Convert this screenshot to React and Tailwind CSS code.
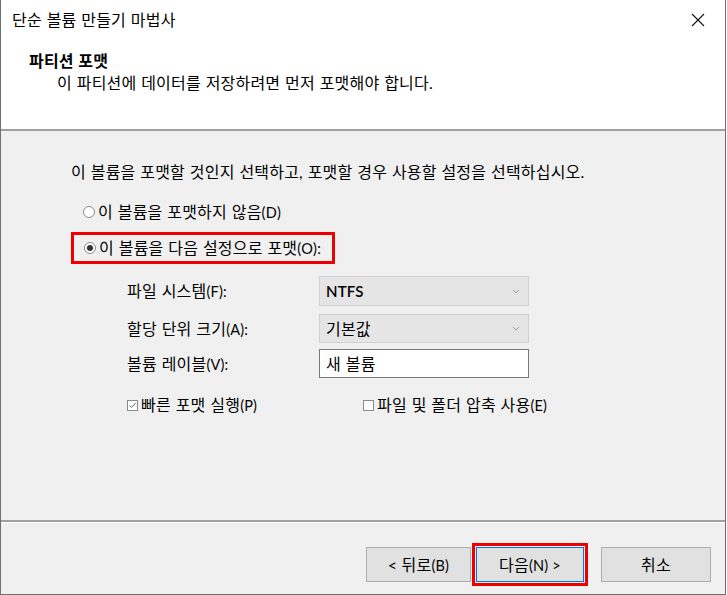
const font = { fontFamily: "Lato, 'Noto Sans CJK KR', sans-serif", letterSpacing: "0.2px", wordSpacing: "0.5px" };

// Latin bits render smaller than the Hangul in the original dialog
const L = ({ children }) => <span className="text-[14.5px]">{children}</span>;

const Chevron = () => (
  <svg width="8" height="5" viewBox="0 0 8 5" className="text-[#9a9a9a]">
    <polyline points="1,1 4,4 7,1" fill="none" stroke="currentColor" strokeWidth="1" />
  </svg>
);

const Radio = ({ checked }) => (
  <span className="w-[12px] h-[12px] rounded-full border border-[#8a8a8a] bg-white flex items-center justify-center">
    {checked && <span className="w-[6px] h-[6px] rounded-full bg-[#333]" />}
  </span>
);

const Check = ({ checked }) => (
  <span className="w-[11px] h-[11px] border border-[#8a8a8a] bg-white flex items-center justify-center">
    {checked && (
      <svg width="9" height="9" viewBox="0 0 9 9">
        <polyline points="1.5,4.5 3.5,6.5 7.5,2" fill="none" stroke="#666" strokeWidth="1" />
      </svg>
    )}
  </span>
);

const Combo = ({ children, h }) => (
  <div className={`w-[210px] ${h} bg-[#e5e5e5] border border-[#d0d0d0] flex items-center justify-between pl-[6px] pr-[8px]`}>
    <span>{children}</span>
    <Chevron />
  </div>
);

export default function App() {
  return (
    <div style={font} className="w-[726px] h-[595px] border-l border-r border-b border-[#6f6f6f] bg-[#f0f0f0] text-[16px] text-black flex flex-col">
      {/* header */}
      <div className="bg-white h-[129px] flex flex-col">
        <div className="h-[40px] flex items-center justify-between pl-[11px] pr-[20px]">
          <span>단순 볼륨 만들기 마법사</span>
          <svg width="14" height="14" viewBox="0 0 14 14">
            <path d="M1 1 L13 13 M13 1 L1 13" stroke="#111" strokeWidth="1.1" />
          </svg>
        </div>
        <div className="pl-[28px] mt-[10px] font-bold leading-[22px]">파티션 포맷</div>
        <div className="pl-[56px] leading-[22px]">이 파티션에 데이터를 저장하려면 먼저 포맷해야 합니다.</div>
      </div>
      <div className="h-[2px] bg-[#a0a0a0]" />

      {/* body */}
      <div className="flex-1 flex flex-col pl-[70px]">
        <div className="mt-[30px] leading-[22px]">이 볼륨을 포맷할 것인지 선택하고, 포맷할 경우 사용할 설정을 선택하십시오.</div>
        <div className="mt-[18px] flex items-center gap-[3px] pl-[12px] h-[22px]">
          <Radio />
          <span>이 볼륨을 포맷하지 않음<L>(D)</L></span>
        </div>
        <div className="mt-[9px] self-start border-[3px] border-[#ee0000] h-[32px] w-[264px] flex items-center gap-[3px] pl-[10px]">
          <Radio checked />
          <span>이 볼륨을 다음 설정으로 포맷<L>(O):</L></span>
        </div>

        <div className="pl-[56px] mt-[12px] flex flex-col">
          <div className="flex items-center h-[30px]">
            <span className="w-[192px]">파일 시스템<L>(F):</L></span>
            <Combo h="h-[30px]"><span className="font-semibold text-[15px]">NTFS</span></Combo>
          </div>
          <div className="flex items-center h-[29px] mt-[8px]">
            <span className="w-[192px]">할당 단위 크기<L>(A):</L></span>
            <Combo h="h-[29px]">기본값</Combo>
          </div>
          <div className="flex items-center h-[29px] mt-[6px]">
            <span className="w-[192px]">볼륨 레이블<L>(V):</L></span>
            <div className="w-[210px] h-[29px] bg-white border border-[#7a7a7a] flex items-center pl-[6px]">새 볼륨</div>
          </div>
          <div className="flex items-center h-[22px] mt-[16px]">
            <span className="w-[236px] flex items-center gap-[3px]">
              <Check checked />
              <span>빠른 포맷 실행<L>(P)</L></span>
            </span>
            <span className="flex items-center gap-[3px]">
              <Check />
              <span>파일 및 폴더 압축 사용<L>(E)</L></span>
            </span>
          </div>
        </div>
      </div>

      {/* footer */}
      <div className="h-[2px] bg-[#a0a0a0]" />
      <div className="h-[1px] bg-white" />
      <div className="h-[71px] flex items-start justify-end pr-[14px] pt-[20px]">
        <button className="w-[105px] h-[35px] mt-[4px] bg-[#e1e1e1] border border-[#adadad]">&lt; 뒤로<L>(B)</L></button>
        <div className="border-[3px] border-[#ee0000] p-[1px] ml-[1px]">
          <button className="w-[108px] h-[35px] bg-[#e1e1e1] border border-[#0078d7] block">다음<L>(N) &gt;</L></button>
        </div>
        <button className="w-[110px] h-[35px] mt-[4px] ml-[13px] bg-[#e1e1e1] border border-[#adadad]">취소</button>
      </div>
    </div>
  );
}
